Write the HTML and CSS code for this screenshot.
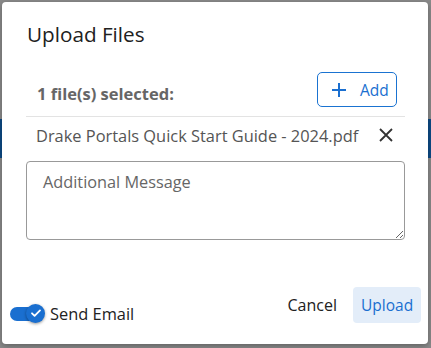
FILE: index.html
```html
<!DOCTYPE html>
<html lang="en">
<head>
    <meta charset="UTF-8">
    <meta name="viewport" content="width=device-width, initial-scale=1.0">
    <title>Upload Files</title>
    <link rel="stylesheet" href="styles.css">
</head>
<body>
    <div class="dialog">
        <h1 class="title">Upload Files</h1>

        <div class="files-head">
            <span class="count">1 file(s) selected:</span>
            <button class="btn-add">
                <svg width="16" height="16" viewBox="0 0 16 16"><path d="M8 1v14M1 8h14" stroke="currentColor" stroke-width="2" fill="none"/></svg>
                <span>Add</span>
            </button>
        </div>

        <div class="file-row">
            <span class="file-name">Drake Portals Quick Start Guide - 2024.pdf</span>
            <button class="btn-remove" title="Remove">
                <svg width="14" height="14" viewBox="0 0 14 14"><path d="M1 1l12 12M13 1L1 13" stroke="currentColor" stroke-width="1.8" fill="none"/></svg>
            </button>
        </div>

        <textarea class="message" placeholder="Additional Message"></textarea>

        <div class="footer">
            <label class="toggle">
                <span class="track"><span class="thumb">
                    <svg width="12" height="12" viewBox="0 0 12 12"><path d="M2 6.3l2.6 2.6L10 3.4" stroke="#fff" stroke-width="1.8" fill="none" stroke-linecap="round" stroke-linejoin="round"/></svg>
                </span></span>
                <span class="toggle-label">Send Email</span>
            </label>
            <div class="actions">
                <button class="btn-text">Cancel</button>
                <button class="btn-primary">Upload</button>
            </div>
        </div>
    </div>
</body>
</html>
```

FILE: styles.css
```css
body {
    margin: 0;
    padding: 2px 3px 4px 2px;
    font-family: "Open Sans", Arial, sans-serif;
    background: linear-gradient(to bottom, #8a8a8a 0, #8a8a8a 119px, #0c4a86 119px, #0c4a86 158px, #8a8a8a 158px);
    height: 348px;
    box-sizing: border-box;
}
.dialog {
    background-color: white;
    border-radius: 4px;
    height: 342px;
    box-sizing: border-box;
    padding: 0 23px 0 24px;
    display: flex;
    flex-direction: column;
    box-shadow: 0 2px 6px rgba(0,0,0,0.3);
}
.title {
    font-size: 20.7px;
    font-weight: 400;
    color: #212121;
    margin: 18px 0 0 1px;
    line-height: 28px;
}
.files-head {
    display: flex;
    justify-content: space-between;
    align-items: flex-end;
    margin-top: 24px;
    padding: 0 8px 9px 11px;
    border-bottom: 1px solid #e3e3e3;
}
.count {
    font-size: 16.5px;
    font-weight: 700;
    color: #666;
    line-height: 20px;
    margin-bottom: 3px;
}
.btn-add {
    display: flex;
    align-items: center;
    gap: 13px;
    height: 35px;
    width: 80px;
    padding: 0 0 0 13px;
    box-sizing: border-box;
    border: 1px solid #1a73d1;
    border-radius: 5px;
    background: white;
    color: #1a6fd0;
    font-family: inherit;
    font-size: 15.5px;
    cursor: pointer;
}
.file-row {
    display: flex;
    justify-content: space-between;
    align-items: center;
    padding: 3px 12px 0 10px;
    height: 30px;
}
.file-name {
    font-size: 16.4px;
    color: #555;
}
.btn-remove {
    border: none;
    background: none;
    color: #333;
    padding: 0;
    display: flex;
    cursor: pointer;
}
.message {
    margin-top: 11px;
    height: 79px;
    border: 1px solid #999;
    border-radius: 4px;
    padding: 9px 16px;
    box-sizing: border-box;
    font-family: inherit;
    font-size: 16.3px;
    resize: vertical;
}
.message::placeholder {
    color: #666;
}
.footer {
    margin-top: auto;
    margin-bottom: 20px;
    margin-left: -16px;
    margin-right: -16px;
    display: flex;
    justify-content: space-between;
    align-items: flex-end;
}
.toggle {
    display: flex;
    align-items: center;
    gap: 4px;
    margin-bottom: -1px;
}
.track {
    position: relative;
    width: 27px;
    height: 14px;
    border-radius: 7px;
    background-color: #1a6fd0;
    margin-right: 9px;
}
.thumb {
    position: absolute;
    left: 16px;
    top: -3px;
    width: 19px;
    height: 19px;
    border-radius: 50%;
    background-color: #1a6fd0;
    box-shadow: 0 1px 3px rgba(0,0,0,0.4);
    display: flex;
    align-items: center;
    justify-content: center;
}
.toggle-label {
    font-size: 16.4px;
    color: #222;
}
.actions {
    display: flex;
    align-items: center;
    gap: 8px;
    margin-bottom: 1px;
}
.btn-text, .btn-primary {
    font-family: inherit;
    border: none;
    border-radius: 4px;
    cursor: pointer;
    height: 36px;
}
.btn-text {
    background: none;
    color: #212121;
    font-size: 16px;
    padding: 0 8px;
}
.btn-primary {
    background-color: #e3edf9;
    color: #1a6fd0;
    font-size: 15.5px;
    padding: 0 8px;
    width: 68px;
}
```
